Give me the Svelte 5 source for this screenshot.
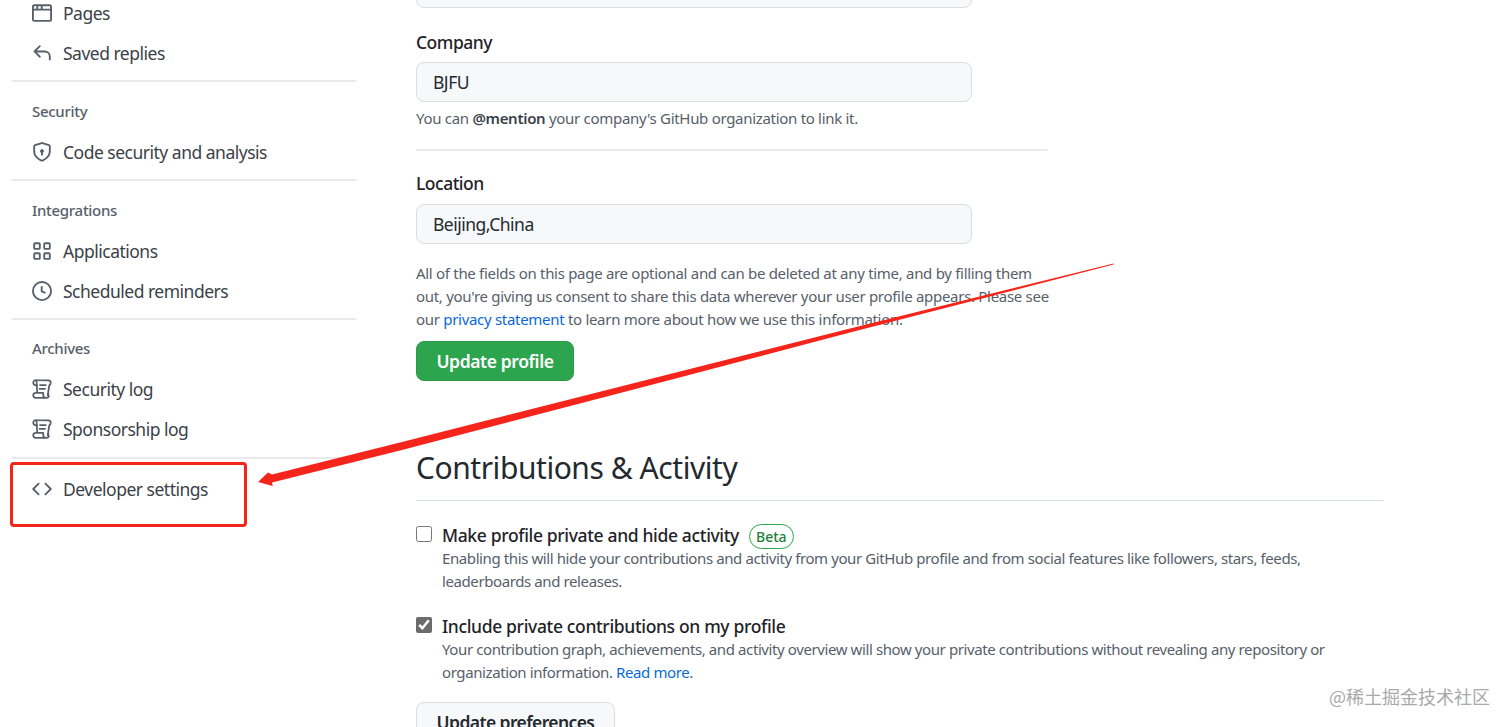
<script>
  const icons = {
    browser: 'M0 2.75C0 1.784.784 1 1.75 1h12.5c.966 0 1.75.784 1.75 1.75v10.5A1.75 1.75 0 0 1 14.25 15H1.75A1.75 1.75 0 0 1 0 13.25ZM14.5 6h-13v7.25c0 .138.112.25.25.25h12.5a.25.25 0 0 0 .25-.25Zm-6-3.5v2h6V2.75a.25.25 0 0 0-.25-.25ZM5 2.5v2h2v-2Zm-3.25 0a.25.25 0 0 0-.25.25V4.5h2v-2Z',
    reply: 'M6.78 1.97a.75.75 0 0 1 0 1.06L3.81 6h6.44A4.75 4.75 0 0 1 15 10.75v2.5a.75.75 0 0 1-1.5 0v-2.5a3.25 3.25 0 0 0-3.25-3.25H3.81l2.97 2.97a.749.749 0 0 1-.326 1.275.749.749 0 0 1-.734-.215L1.47 7.28a.75.75 0 0 1 0-1.06l4.25-4.25a.75.75 0 0 1 1.06 0Z',
    shield: 'M7.467.133a1.748 1.748 0 0 1 1.066 0l5.25 1.68A1.75 1.75 0 0 1 15 3.48V7c0 1.566-.32 3.182-1.303 4.682-.983 1.498-2.585 2.813-5.032 3.855a1.697 1.697 0 0 1-1.33 0c-2.447-1.042-4.049-2.357-5.032-3.855C1.32 10.182 1 8.566 1 7V3.48a1.75 1.75 0 0 1 1.217-1.667Zm.61 1.429a.25.25 0 0 0-.153 0l-5.25 1.68a.25.25 0 0 0-.174.238V7c0 1.358.275 2.666 1.057 3.86.784 1.194 2.121 2.34 4.366 3.297a.196.196 0 0 0 .154 0c2.245-.956 3.582-2.104 4.366-3.298C13.225 9.666 13.5 8.36 13.5 7V3.48a.251.251 0 0 0-.174-.237l-5.25-1.68ZM8.75 8.582v1.668a.75.75 0 0 1-1.5 0V8.582a1.5 1.5 0 1 1 1.5 0Z',
    apps: 'M2.5 1h3A1.5 1.5 0 0 1 7 2.5v3A1.5 1.5 0 0 1 5.5 7h-3A1.5 1.5 0 0 1 1 5.5v-3A1.5 1.5 0 0 1 2.5 1Zm0 1.5v3h3v-3Zm8-1.5h3A1.5 1.5 0 0 1 15 2.5v3A1.5 1.5 0 0 1 13.5 7h-3A1.5 1.5 0 0 1 9 5.5v-3A1.5 1.5 0 0 1 10.5 1Zm0 1.5v3h3v-3ZM2.5 9h3A1.5 1.5 0 0 1 7 10.5v3A1.5 1.5 0 0 1 5.5 15h-3A1.5 1.5 0 0 1 1 13.5v-3A1.5 1.5 0 0 1 2.5 9Zm0 1.5v3h3v-3Zm8-1.5h3a1.5 1.5 0 0 1 1.5 1.5v3a1.5 1.5 0 0 1-1.5 1.5h-3A1.5 1.5 0 0 1 9 13.5v-3A1.5 1.5 0 0 1 10.5 9Zm0 1.5v3h3v-3Z',
    clock: 'M8 0a8 8 0 1 1 0 16A8 8 0 0 1 8 0ZM1.5 8a6.5 6.5 0 1 0 13 0 6.5 6.5 0 0 0-13 0Zm7-3.25v2.992l2.028.812a.75.75 0 0 1-.557 1.392l-2.5-1A.751.751 0 0 1 7 8.25v-3.5a.75.75 0 0 1 1.5 0Z',
    code: 'm11.28 3.22 4.25 4.25a.75.75 0 0 1 0 1.06l-4.25 4.25a.749.749 0 0 1-1.275-.326.749.749 0 0 1 .215-.734L13.94 8l-3.72-3.72a.749.749 0 0 1 .326-1.275.749.749 0 0 1 .734.215Zm-6.56 0a.751.751 0 0 1 1.042.018.751.751 0 0 1 .018 1.042L2.06 8l3.72 3.72a.749.749 0 0 1-.326 1.275.749.749 0 0 1-.734-.215L.47 8.53a.75.75 0 0 1 0-1.06Z'
  };

  const groups = [
    { items: [{ icon: 'browser', label: 'Pages' }, { icon: 'reply', label: 'Saved replies' }] },
    { title: 'Security', items: [{ icon: 'shield', label: 'Code security and analysis' }] },
    { title: 'Integrations', items: [{ icon: 'apps', label: 'Applications' }, { icon: 'clock', label: 'Scheduled reminders' }] },
    { title: 'Archives', items: [{ icon: 'log', label: 'Security log' }, { icon: 'log', label: 'Sponsorship log' }] },
    { items: [{ icon: 'code', label: 'Developer settings' }] }
  ];
</script>

<div class="page">
  <nav class="sidebar">
    {#each groups as group}
      <div class="group">
        {#if group.title}
          <h3>{group.title}</h3>
        {/if}
        {#each group.items as item}
          <div class="row">
            {#if item.icon === 'log'}
              <svg class="icon" viewBox="0 0 16 16" fill="none" stroke="currentColor" stroke-width="1.4" stroke-linecap="round" stroke-linejoin="round">
                <path d="M4 4.8H2.6A1.6 1.6 0 0 1 1 3.2 2 2 0 0 1 3 1h10a2 2 0 0 1 2 2c0 .9-.5 1.7-1.2 2.2L12.6 13a1.8 1.8 0 0 0 .4-1.6" />
                <path d="M3.6 1.2 4.2 11H3a2 2 0 0 0 0 4h8.8c1 0 1.7-.8 1.7-1.8M4.2 11H9v1.8a2 2 0 0 0 2 2.2" />
                <path d="M6.4 4.8h4.6M6 7.8h4.4" />
              </svg>
            {:else}
              <svg class="icon" viewBox="0 0 16 16" fill="currentColor"><path d={icons[item.icon]} /></svg>
            {/if}
            <span>{item.label}</span>
          </div>
        {/each}
      </div>
    {/each}
  </nav>

  <main class="content">
    <div class="profile">
      <input class="field cut" type="text" aria-label="URL" />

      <label class="label" for="company">Company</label>
      <input class="field" id="company" type="text" value="BJFU" />
      <p class="note">You can <strong>@mention</strong> your company's GitHub organization to link it.</p>

      <hr />

      <label class="label location" for="location">Location</label>
      <input class="field" id="location" type="text" value="Beijing,China" />
      <p class="note disclaimer">
        All of the fields on this page are optional and can be deleted at any time, and by filling them
        out, you're giving us consent to share this data wherever your user profile appears. Please see
        our <a href="#privacy">privacy statement</a> to learn more about how we use this information.
      </p>
      <button class="btn primary">Update profile</button>
    </div>

    <h2>Contributions &amp; Activity</h2>

    <div class="option">
      <input type="checkbox" id="private" />
      <div>
        <label for="private">Make profile private and hide activity</label>
        <span class="beta">Beta</span>
        <p>Enabling this will hide your contributions and activity from your GitHub profile and from social features like followers, stars, feeds, leaderboards and releases.</p>
      </div>
    </div>

    <div class="option">
      <input type="checkbox" id="include" checked />
      <div>
        <label for="include">Include private contributions on my profile</label>
        <p>Your contribution graph, achievements, and activity overview will show your private contributions without revealing any repository or organization information. <a href="#more">Read more</a>.</p>
      </div>
    </div>

    <button class="btn secondary">Update preferences</button>
  </main>

  <!-- annotation drawn over the screenshot -->
  <div class="redbox"></div>
  <svg class="arrow" width="1512" height="727" viewBox="0 0 1512 727">
    <polygon fill="#f5251c" points="1113.5,263.5 850,328.5 670,374 400,442.5 272,474.5 268,472.5 258,482 272.7,486 272,482.5 400,450.5 670,380 850,332.5 1113.5,264.5" />
  </svg>
  <div class="watermark">@稀土掘金技术社区</div>
</div>

<style>
  :global(body) {
    background: #fff;
  }

  .page {
    position: relative;
    display: flex;
    height: 727px;
    overflow: hidden;
    font-family: "Noto Sans", "Liberation Sans", sans-serif;
    color: #24292f;
    font-size: 17.5px;
    letter-spacing: -0.5px;
  }

  .sidebar {
    width: 344px;
    margin: -7px 0 0 12px;
    flex: none;
  }

  .group {
    border-bottom: 2px solid #e8eaed;
    padding-bottom: 7px;
    margin-bottom: 10px;
  }

  .group:nth-child(4) {
    margin-top: -1px;
    padding-bottom: 8px;
  }

  .group:last-child {
    border-bottom: none;
  }

  .group h3 {
    margin: 0 0 2px;
    padding: 0 20px;
    font-size: 15px;
    line-height: 38px;
    font-weight: 500;
    letter-spacing: -0.3px;
    color: #57606a;
  }

  .row {
    display: flex;
    align-items: center;
    gap: 11px;
    height: 40px;
    padding-left: 20px;
    color: #3b4148;
  }

  .icon {
    width: 20px;
    height: 20px;
    flex: none;
    color: #57606a;
  }

  .content {
    width: 968px;
    margin: -32px 0 0 60px;
    flex: none;
  }

  .profile {
    width: 632px;
  }

  .field {
    display: block;
    box-sizing: border-box;
    width: 556px;
    height: 40px;
    padding: 0 16px;
    border: 1px solid #dadde1;
    border-radius: 8px;
    background: #f6f8fa;
    font: inherit;
    letter-spacing: inherit;
    color: #24292f;
  }

  .cut {
    margin-bottom: 19px;
  }

  .label {
    display: block;
    line-height: 30px;
    margin-bottom: 5px;
    font-weight: 500;
    color: #1f2328;
  }

  .label.location {
    margin-bottom: 6px;
  }

  .note {
    margin: 5px 0 0;
    font-size: 15px;
    line-height: 23px;
    letter-spacing: -0.3px;
    color: #57606a;
  }

  .note strong {
    font-weight: 600;
    color: #3b4148;
  }

  .disclaimer {
    margin: 18px -6px 10px 0;
  }

  a {
    color: #0969da;
    text-decoration: none;
  }

  hr {
    border: none;
    height: 2px;
    background: #e8eaed;
    margin: 19px 0 17px;
  }

  .btn {
    display: block;
    box-sizing: border-box;
    height: 40px;
    border-radius: 8px;
    font: inherit;
    font-weight: 600;
    letter-spacing: -0.4px;
  }

  .primary {
    width: 158px;
    background: #2da44e;
    border: 1px solid #2a9a49;
    color: #fff;
  }

  .secondary {
    width: 199px;
    margin-top: 16px;
    background: #f6f8fa;
    border: 1px solid #dadde1;
    color: #24292f;
    letter-spacing: -0.6px;
  }

  h2 {
    margin: 64px 0 19px;
    padding-bottom: 9px;
    border-bottom: 1px solid #d8dee4;
    font-size: 30px;
    line-height: 46px;
    font-weight: 400;
    letter-spacing: -0.45px;
    color: #24292f;
  }

  .option {
    display: flex;
    gap: 10px;
    margin-bottom: 18px;
  }

  .option input {
    width: 16px;
    height: 16px;
    margin: 6px 0 0 0;
    flex: none;
    accent-color: #6b6b6b;
  }

  .option label {
    font-weight: 500;
    letter-spacing: -0.35px;
    color: #1f2328;
    line-height: 30px;
  }

  .option p {
    margin: -3px 0 0;
    font-size: 15px;
    line-height: 23px;
    letter-spacing: -0.4px;
    color: #57606a;
  }

  .beta {
    display: inline-block;
    margin-left: 6px;
    padding: 0 6px;
    border: 1px solid #2da44e;
    border-radius: 14px;
    font-size: 14px;
    line-height: 23px;
    font-weight: 500;
    letter-spacing: 0;
    color: #1a7f37;
  }

  .redbox {
    position: absolute;
    left: 10px;
    top: 462px;
    width: 237px;
    height: 65px;
    box-sizing: border-box;
    border: 3px solid #f5251c;
    border-radius: 4px;
  }

  .arrow {
    position: absolute;
    left: 0;
    top: 0;
    pointer-events: none;
  }

  .watermark {
    position: absolute;
    right: 22px;
    top: 685px;
    font-family: "Noto Sans CJK SC", sans-serif;
    font-size: 18px;
    letter-spacing: 0;
    line-height: 22px;
    color: #a9a9a9;
  }
</style>
